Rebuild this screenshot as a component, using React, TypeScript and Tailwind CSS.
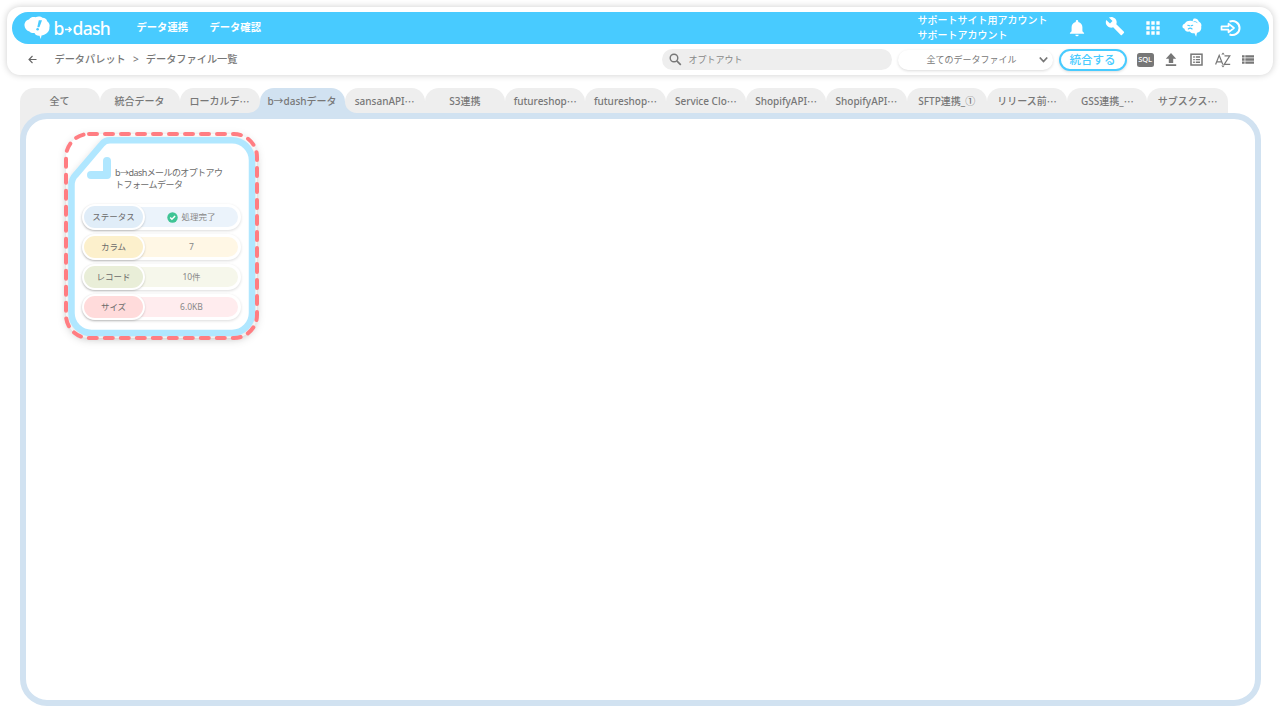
import { useState } from 'react';

const tabs = [
  '全て',
  '統合データ',
  'ローカルデ⋯',
  'b→dashデータ',
  'sansanAPI⋯',
  'S3連携',
  'futureshop⋯',
  'futureshop⋯',
  'Service Clo⋯',
  'ShopifyAPI⋯',
  'ShopifyAPI⋯',
  'SFTP連携_①',
  'リリース前⋯',
  'GSS連携_⋯',
  'サブスクス⋯',
];

const rows = [
  { label: 'ステータス', value: '処理完了', left: 'bg-[#e0edf8]', right: 'bg-[#ebf3fb]', done: true },
  { label: 'カラム', value: '7', left: 'bg-[#fcf0cc]', right: 'bg-[#fff7e5]' },
  { label: 'レコード', value: '10件', left: 'bg-[#e9eed8]', right: 'bg-[#f6f7eb]' },
  { label: 'サイズ', value: '6.0KB', left: 'bg-[#ffdbdb]', right: 'bg-[#ffecee]' },
];

function Logo() {
  return (
    <svg className="ml-3 h-6 w-[27px] shrink-0" viewBox="0 0 27 24">
      <path
        d="M5 3.500C6.500 1 9.500 .8 11.500 1.200 14 0 17 .3 18.500 1.800c2.500 0 4.300 1.500 4.700 3.500 2 1.500 3 4 2.200 6.200.3 3.500-2.500 6.500-6.700 7.700l-1.200.4-.7 3.400-1.300-3.300c-2.400.2-4.200-.8-5-2.700-2 .3-4-.3-5-1.500C2.700 14.800.6 12.300.5 9.500.3 6.500 2.300 4.100 5 3.500Z"
        fill="#fff"
      />
      <path d="M14.800 4.300h3.200l-2.600 7h-2.100Z" fill="#48cbff" />
      <circle cx="13.600" cy="13.300" r="1.300" fill="#48cbff" />
    </svg>
  );
}

function TopIcons() {
  return (
    <div className="flex items-center text-white">
      <svg className="h-5 w-5" viewBox="0 0 24 24" fill="currentColor">
        <path d="M12 22a2 2 0 0 0 2-2h-4a2 2 0 0 0 2 2Zm6.500-6v-5c0-3.100-1.700-5.600-5-6.300V4a1.500 1.500 0 0 0-3 0v.7c-3.300.7-5 3.200-5 6.300v5l-2 2v1h17v-1Z" />
      </svg>
      <svg className="-mt-1 ml-[18px] h-5 w-5" viewBox="0 0 24 24" fill="currentColor">
        <path d="m22.700 19-9.100-9.100c.9-2.300.4-5-1.500-6.900-2-2-5-2.400-7.400-1.300L9 6 6 9 1.600 4.700C.4 7.100.9 10.100 2.900 12.100c1.900 1.900 4.600 2.400 6.900 1.500l9.100 9.100c.4.400 1 .4 1.400 0l2.300-2.300c.5-.4.500-1.100.1-1.400Z" />
      </svg>
      <svg className="ml-[18px] h-5 w-5" viewBox="0 0 24 24" fill="currentColor">
        <path d="M4 8h4V4H4Zm6 12h4v-4h-4Zm-6 0h4v-4H4Zm0-6h4v-4H4Zm6 0h4v-4h-4Zm6-10v4h4V4Zm-6 4h4V4h-4Zm6 6h4v-4h-4Zm0 6h4v-4h-4Z" />
      </svg>
      <svg className="ml-[18px] h-5 w-[22px]" viewBox="0 0 22 20">
        <path
          d="M3.800 5.500C5.500 2.500 9 2.500 11.500 3.200L12.500 .8c2-.8 4.500 0 5.300 2.700 2.200 1 3.200 3.300 2.400 5.300.5 3-1.200 5.500-4.200 6l-.9 4-1.600-3.500c-2 .2-3.800-.3-4.800-1.800-3 .6-5-.5-5.200-2.700C.3 10 1.300 6.200 3.800 5.500Z"
          fill="#fff"
        />
        <path d="M13 3.600c1.500-.3 2.500.2 3.200 1.200" fill="none" stroke="#48cbff" strokeWidth=".8" strokeLinecap="round" />
        <path d="m6.800 7.200 1.900.6M11.700 7.200l-1.500.6M7.300 11c1.300-1.300 2.600-1.200 3.800 0" fill="none" stroke="#48cbff" strokeWidth="1.100" strokeLinecap="round" />
      </svg>
      <svg className="ml-[17px] h-5 w-[22px]" viewBox="0 0 22 20" fill="none" stroke="currentColor" strokeWidth="1.700">
        <path d="M9.500 3.700a7 7 0 1 1 0 12.600" strokeWidth="2" />
        <path d="M1.500 8.300h7V5.700l5.500 4.300-5.500 4.300v-2.600h-7Z" strokeLinejoin="round" />
      </svg>
    </div>
  );
}

function ToolIcons() {
  return (
    <div className="flex items-center text-[#777]">
      <div className="flex h-[14px] w-[17px] items-center justify-center rounded-[2.500px] bg-[#777] font-['Noto_Sans'] text-[7.500px] font-medium tracking-[-0.2px] text-white">SQL</div>
      <svg className="ml-[11px] h-4 w-3" viewBox="0 0 12 16" fill="currentColor">
        <path d="M6 1 11.200 6.800H8.200V11H3.800V6.800H.8ZM.8 12.200h10.400V14H.8Z" />
      </svg>
      <svg className="ml-[13px] h-[13px] w-[13px]" viewBox="0 0 13 13" fill="none" stroke="currentColor">
        <rect x="1" y="1.200" width="11" height="10.800" strokeWidth="1.500" />
        <path d="M3.200 4h1.600M3.200 6.600h1.600M3.200 9.200h1.600M5.800 4h4.200M5.800 6.600h4.200M5.800 9.200h4.200" strokeWidth="1.400" />
      </svg>
      <svg className="ml-3 h-[16px] w-[16px]" viewBox="0 0 16 16" fill="none" stroke="currentColor" strokeWidth="1.200">
        <path d="m.6 12.500 3.600-9.200 3.600 9.200M1.800 9.800h4.800M9.500 3.800h5.300L9.200 12.300h6" />
        <path d="m8 .5 1.700 2H6.300Zm0 15-1.700-2h3.400Z" fill="currentColor" stroke="none" />
      </svg>
      <svg className="ml-[11px] h-[11px] w-[12px]" viewBox="0 0 12 11" fill="currentColor">
        <path d="M0 1.200h2.600v2.400H0Zm3.300 0H12v2.400H3.300ZM0 4.300h2.600v2.400H0Zm3.300 0H12v2.400H3.300ZM0 7.400h2.600v2.400H0Zm3.300 0H12v2.400H3.300Z" />
      </svg>
    </div>
  );
}

function FileCard() {
  return (
    <div className="relative h-[212px] w-[202px]">
      <svg className="absolute inset-0 h-full w-full overflow-visible" viewBox="0 0 202 212" fill="none">
        <rect x="6" y="4" width="191" height="204" rx="23" fill="#fff" className="drop-shadow-[0_2px_4px_rgba(0,0,0,0.16)]" />
        <path
          d="M50 10.300H172a20 20 0 0 1 20 20V183a20 20 0 0 1-20 20H31.500a20 20 0 0 1-20-20V55q0-6 4-10L42 14q3-3.700 8-3.700Z"
          fill="#fff"
          stroke="#b0e7ff"
          strokeWidth="6.500"
          className="drop-shadow-[0_1px_3px_rgba(0,0,0,0.12)]"
        />
        <path d="M47 31v14H31" stroke="#b0e7ff" strokeWidth="8" strokeLinecap="round" strokeLinejoin="round" />
        <rect x="6" y="4" width="191" height="204" rx="23" stroke="#ff7d82" strokeWidth="4" strokeDasharray="8 8" strokeLinecap="round" />
      </svg>
      <div className="relative pl-[22px] pt-[37px]">
        <p className="ml-[33px] h-[37px] whitespace-nowrap text-[9px] leading-3 text-[#6b6b6b]">
          <span className="tracking-[-0.55px]">b→dash</span>
          <span className="tracking-[-0.6px]">メールのオプトアウ</span>
          <br />
          <span className="tracking-[-0.55px]">トフォームデータ</span>
        </p>
        <div className="flex flex-col gap-1">
          {rows.map((row) => (
            <div key={row.label} className={`flex h-[26px] w-[159px] rounded-full border-[3px] border-white shadow-[0_1px_3px_rgba(0,0,0,0.14)] ${row.right}`}>
              <div className={`-m-[3px] flex h-[26px] w-[63px] shrink-0 items-center justify-center rounded-full border-[2.500px] border-white text-[8.500px] text-[#6b6b6b] shadow-[0_1px_2px_rgba(0,0,0,0.18)] ${row.left}`}>
                {row.label}
              </div>
              <div className="flex flex-1 items-center justify-center pl-[3px] text-[8.500px] text-[#888]">
                {row.done && (
                  <svg className="mr-[3px] h-[11px] w-[11px]" viewBox="0 0 11 11">
                    <circle cx="5.500" cy="5.500" r="5.200" fill="#3fc495" />
                    <path d="m3.200 5.500 1.700 1.700 3.200-3.200" fill="none" stroke="#fff" strokeWidth="1.500" />
                  </svg>
                )}
                {row.value}
              </div>
            </div>
          ))}
        </div>
      </div>
    </div>
  );
}

export default function App() {
  const [active, setActive] = useState(3);
  const [query, setQuery] = useState('オプトアウト');

  const shape = (i: number) => {
    if (i === active) return 'w-[85px] bg-[#d1e2f1] rounded-t-[14px]';
    if (i === active - 1) return 'w-20 bg-[#eee] rounded-t-[14px] rounded-br-[12px]';
    if (i === active + 1) return 'w-[80.3px] bg-[#eee] rounded-t-[14px] rounded-bl-[12px]';
    return i < active ? 'w-20 bg-[#eee] rounded-t-[14px]' : 'w-[80.3px] bg-[#eee] rounded-t-[14px]';
  };

  // fills the notch left between the feet of two neighbouring tabs
  const foot = (i: number) => {
    if (i === active) return 'bg-[linear-gradient(transparent_50%,#d1e2f1_50%)]';
    if (i === active - 1) return 'bg-[linear-gradient(transparent_50%,#eee_50%),linear-gradient(transparent_50%,#d1e2f1_50%)] bg-[length:40px_25px,80px_25px] bg-no-repeat';
    if (i === active + 1) return 'bg-[linear-gradient(transparent_50%,#d1e2f1_50%)]';
    return 'bg-[linear-gradient(transparent_50%,#eee_50%)]';
  };

  return (
    <div className="h-[720px] w-[1280px] overflow-hidden bg-white pt-[7px] font-['Noto_Sans','Noto_Sans_CJK_JP',sans-serif] text-[#777]">
      {/* Header */}
      <header className="mx-[7px] h-[68px] rounded-[13px] bg-white px-[4.500px] pt-[4.500px] shadow-[0_0_7px_rgba(0,0,0,0.2)]">
        <div className="flex h-8 items-center rounded-full bg-[#48cbff] text-white">
          <Logo />
          <span className="ml-[3px] flex w-[58px] items-center whitespace-nowrap pt-px font-['Noto_Sans'] text-[17.500px] font-medium leading-8 tracking-[-0.75px]">
            b
            <svg className="ml-px mr-px mt-[3px] h-[7px] w-[7px] shrink-0" viewBox="0 0 7 7" fill="none" stroke="currentColor" strokeWidth="1.500">
              <path d="M0 3.500h6M3.700 1l2.500 2.500L3.700 6" />
            </svg>
            dash
          </span>
          <nav className="ml-[25px] flex gap-[21.500px] pt-px text-[10.300px] font-bold">
            <span>データ連携</span>
            <span>データ確認</span>
          </nav>
          <div className="ml-auto mr-[19px] w-[130px] whitespace-nowrap text-[10px] font-medium leading-[14.500px]">
            <div>サポートサイト用アカウント</div>
            <div>サポートアカウント</div>
          </div>
          <div className="mr-[27px]">
            <TopIcons />
          </div>
        </div>

        <div className="flex h-8 items-center pl-4 pr-[15px]">
          <svg className="h-[9px] w-[9px]" viewBox="0 0 9 9" fill="none" stroke="#666" strokeWidth="1.100">
            <path d="M8.500 4.500H1M4.500 1 1 4.500 4.500 8" />
          </svg>
          <div className="ml-[18px] flex pt-px text-[10.200px] font-medium">
            <span>データパレット</span>
            <span className="w-[20px] text-center">&gt;</span>
            <span>データファイル一覧</span>
          </div>
          <label className="ml-auto flex h-[21px] w-[230px] items-center rounded-full bg-[#eee] pl-[7px]">
            <svg className="h-[13px] w-[13px]" viewBox="0 0 13 13" fill="none" stroke="#777">
              <circle cx="5" cy="5" r="3.800" strokeWidth="1.400" />
              <path d="m7.800 7.800 4 4" strokeWidth="1.700" />
            </svg>
            <input
              className="ml-[7px] w-[180px] bg-transparent text-[9px] text-[#888] outline-none"
              value={query}
              onChange={(e) => setQuery(e.target.value)}
            />
          </label>
          <div className="ml-[6px] flex h-5 w-[155px] items-center rounded-full bg-white pl-[29px] pr-[5px] text-[9px] text-[#777] shadow-[0_1px_3px_rgba(0,0,0,0.14)]">
            <span>全てのデータファイル</span>
            <svg className="ml-auto h-[9px] w-[9px]" viewBox="0 0 9 9" fill="none" stroke="#777" strokeWidth="1.800">
              <path d="m.8 2.500 3.700 4 3.700-4" />
            </svg>
          </div>
          <button className="ml-[6px] mr-[10px] flex h-[22px] w-[68px] items-center justify-center rounded-full border-2 border-[#48cbff] bg-white text-[11.500px] font-medium text-[#48cbff] shadow-[0_1px_3px_rgba(0,0,0,0.14)]">
            統合する
          </button>
          <ToolIcons />
        </div>
      </header>

      {/* Tabs */}
      <div className="ml-[19.500px] mt-[13px] flex h-[25px]">
        {tabs.map((tab, i) => (
          <div key={i} className={foot(i)}>
            <button
              onClick={() => setActive(i)}
              className={`flex h-[25px] items-center justify-center whitespace-nowrap pt-[2px] text-[10px] font-medium ${shape(i)}`}
            >
              {tab.replace('⋯', '')}
              {tab.endsWith('⋯') && <span className="font-['Noto_Sans_CJK_JP',sans-serif]">⋯</span>}
            </button>
          </div>
        ))}
      </div>

      {/* Files */}
      <div className="mx-[19.500px] h-[593px] bg-[linear-gradient(#eee,#eee)] bg-[length:30px_27px] bg-no-repeat">
        <main className="h-full rounded-[27px] border-[6px] border-[#d1e2f1] bg-white pl-[34.500px] pt-[11px]">
          <FileCard />
        </main>
      </div>
    </div>
  );
}
